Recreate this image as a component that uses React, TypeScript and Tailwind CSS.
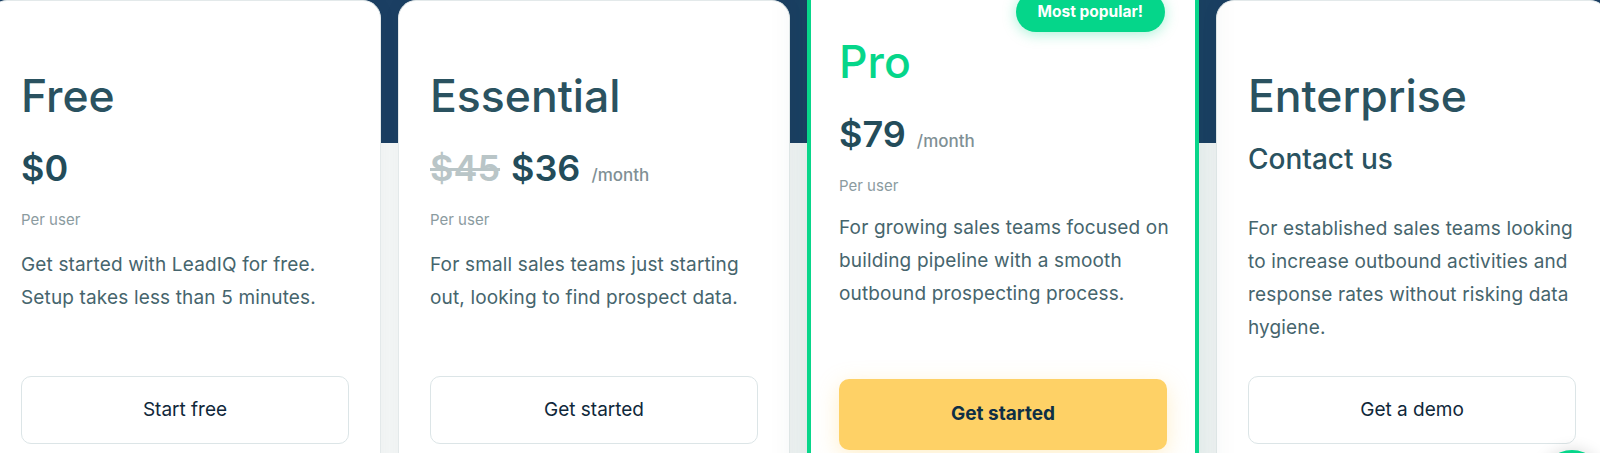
import React from "react";

type Plan = {
  name: string;
  price?: string;
  oldPrice?: string;
  perMonth?: boolean;
  contact?: string;
  lines: string[];
  cta: string;
  popular?: boolean;
};

const plans: Plan[] = [
  {
    name: "Free",
    price: "$0",
    lines: ["Get started with LeadIQ for free.", "Setup takes less than 5 minutes."],
    cta: "Start free",
  },
  {
    name: "Essential",
    oldPrice: "$45",
    price: "$36",
    perMonth: true,
    lines: ["For small sales teams just starting", "out, looking to find prospect data."],
    cta: "Get started",
  },
  {
    name: "Pro",
    price: "$79",
    perMonth: true,
    lines: [
      "For growing sales teams focused on",
      "building pipeline with a smooth",
      "outbound prospecting process.",
    ],
    cta: "Get started",
    popular: true,
  },
  {
    name: "Enterprise",
    contact: "Contact us",
    lines: [
      "For established sales teams looking",
      "to increase outbound activities and",
      "response rates without risking data",
      "hygiene.",
    ],
    cta: "Get a demo",
  },
];

const PlanCard: React.FC<{ plan: Plan }> = ({ plan }) => {
  const pro = plan.popular;
  return (
    <div
      className={
        pro
          ? "relative z-10 mt-[-38px] flex h-[530px] w-[392px] shrink-0 flex-col border-4 border-[#08d68a] bg-white px-[28px] pt-[68px] pb-[38px] shadow-[0_0_36px_rgba(16,84,74,0.14)]"
          : "relative flex h-[480px] w-[392px] shrink-0 flex-col rounded-t-[18px] border border-[#e3e9ea] bg-white px-[31px] pt-[67px] pb-[35px] shadow-[0_0_20px_rgba(0,40,60,0.04)]"
      }
    >
      {pro && (
        <span className="absolute top-[26px] right-[30px] flex h-[40px] items-center rounded-full bg-[#05d68a] px-[22px] text-[15.5px] font-bold text-white shadow-[0_2px_14px_rgba(5,214,138,0.35)]">
          Most popular!
        </span>
      )}

      <h2
        className={`text-[44.5px] leading-[56px] font-medium ${
          pro ? "text-[#06d68a]" : "text-[#2a5260]"
        }`}
      >
        {plan.name}
      </h2>

      {plan.price && (
        <>
          <div className="mt-[22px] flex h-[44px] items-baseline">
            {plan.oldPrice && (
              <span className="mr-[11px] text-[36px] leading-[44px] font-semibold text-[#b9c5c7] line-through decoration-[3px]">
                {plan.oldPrice}
              </span>
            )}
            <span className="text-[36px] leading-[44px] font-semibold text-[#234c5a]">
              {plan.price}
            </span>
            {plan.perMonth && (
              <span className="ml-[11px] text-[17px] font-medium text-[#7f9095]">
                /month
              </span>
            )}
          </div>
          <p className="mt-[20px] text-[15px] leading-[20px] text-[#8b9b9f]">Per user</p>
        </>
      )}

      {plan.contact && (
        <p className="mt-[17px] text-[28px] leading-[36px] font-medium text-[#2a5260]">
          {plan.contact}
        </p>
      )}

      <div
        className={`text-[19px] leading-[33px] tracking-[0.15px] text-[#46656d] ${
          plan.contact ? "mt-[35px]" : pro ? "mt-[15px]" : "mt-[18px]"
        }`}
      >
        {plan.lines.map((line) => (
          <span key={line} className="block whitespace-nowrap">
            {line}
          </span>
        ))}
      </div>

      <button
        className={
          pro
            ? "mt-auto flex h-[71px] w-full items-center justify-center rounded-[10px] bg-[#fed166] text-[19px] font-bold text-[#0e2f45] shadow-[0_6px_22px_rgba(254,209,102,0.35)]"
            : "mt-auto flex h-[68px] w-full items-center justify-center rounded-[10px] border border-[#dce5e7] bg-white text-[19px] text-[#10283a]"
        }
      >
        {plan.cta}
      </button>
    </div>
  );
};

export default function App() {
  return (
    <div className="relative h-[453px] w-[1600px] overflow-hidden bg-[linear-gradient(#1b3f63_143px,#f4f7f7_143px)] font-['Inter',sans-serif]">
      <div className="ml-[-11px] flex items-start gap-[17px]">
        {plans.map((plan) => (
          <PlanCard key={plan.name} plan={plan} />
        ))}
      </div>
      <span className="absolute top-[450px] left-[1542px] z-20 h-[60px] w-[60px] rounded-full bg-[#05d68a] shadow-[0_0_16px_rgba(0,0,0,0.15)]" />
    </div>
  );
}
